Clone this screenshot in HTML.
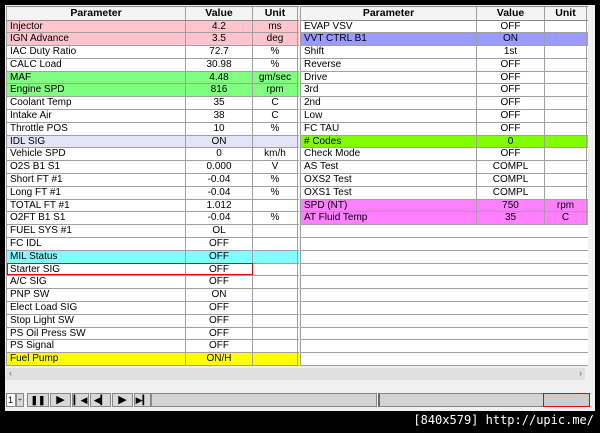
<!DOCTYPE html>
<html><head><style>
body{margin:0;width:600px;height:433px;background:#000;position:relative;overflow:hidden;font-family:"Liberation Sans",Arial,sans-serif;}
#win{position:absolute;left:5px;top:5px;width:590px;height:406px;background:#f0f0f0;}
.t{position:absolute;top:1px;font-size:10px;background:#fff;border-left:1px solid #a0a0a0;border-top:1px solid #888;}
.r{display:flex;height:12.8px;box-sizing:border-box;border-bottom:1px solid #a0a0a0;line-height:12.5px;}
.r>div{box-sizing:border-box;border-right:1px solid #a0a0a0;padding:0 3px;white-space:nowrap;overflow:hidden;}
.h{height:13.5px;background:#f4f4f4;font-weight:bold;font-size:10.5px;text-align:center;line-height:12.5px;border-bottom-color:#888}
#L .r>div:nth-child(1){width:179px}#L .r>div:nth-child(2){width:67px;text-align:center}#L .r>div:nth-child(3){width:45px;text-align:center}
#R .r>div:nth-child(1){width:176px}#R .r>div:nth-child(2){width:68px;text-align:center}#R .r>div:nth-child(3){width:42px;text-align:center}
.h>div{text-align:center!important}
.pk{background:#ffc4cc}.gr{background:#80ff80}.lv{background:#e4e4f8}
.cy{background:#80ffff}.ye{background:#ffff00}.bl{background:#9a9aff}
.lm{background:#80ff00}.mg{background:#ff80ff}
#L{left:1px;width:292px}#R{left:295px;width:287px}
#R .r>div.e{border-right-color:#fff}
#sb{position:absolute;left:1px;top:363px;width:579px;height:12px;background:#e0e0e0;font-size:9px;color:#666}
#tb{position:absolute;left:0;top:387px;width:590px;height:16px;}
.btn{position:absolute;top:1px;height:14px;background:#d8d8d8;border:1px solid #888;box-sizing:border-box;font-size:11px;line-height:13px;text-align:center}
</style></head><body>
<div id="win">
<div class="t" id="L">
<div class="r h"><div>Parameter</div><div>Value</div><div>Unit</div></div>
<div class="r pk"><div>Injector</div><div>4.2</div><div>ms</div></div>
<div class="r pk"><div>IGN Advance</div><div>3.5</div><div>deg</div></div>
<div class="r"><div>IAC Duty Ratio</div><div>72.7</div><div>%</div></div>
<div class="r"><div>CALC Load</div><div>30.98</div><div>%</div></div>
<div class="r gr"><div>MAF</div><div>4.48</div><div>gm/sec</div></div>
<div class="r gr"><div>Engine SPD</div><div>816</div><div>rpm</div></div>
<div class="r"><div>Coolant Temp</div><div>35</div><div>C</div></div>
<div class="r"><div>Intake Air</div><div>38</div><div>C</div></div>
<div class="r"><div>Throttle POS</div><div>10</div><div>%</div></div>
<div class="r lv"><div>IDL SIG</div><div>ON</div><div></div></div>
<div class="r"><div>Vehicle SPD</div><div>0</div><div>km/h</div></div>
<div class="r"><div>O2S B1 S1</div><div>0.000</div><div>V</div></div>
<div class="r"><div>Short FT #1</div><div>-0.04</div><div>%</div></div>
<div class="r"><div>Long FT #1</div><div>-0.04</div><div>%</div></div>
<div class="r"><div>TOTAL FT #1</div><div>1.012</div><div></div></div>
<div class="r"><div>O2FT B1 S1</div><div>-0.04</div><div>%</div></div>
<div class="r"><div>FUEL SYS #1</div><div>OL</div><div></div></div>
<div class="r"><div>FC IDL</div><div>OFF</div><div></div></div>
<div class="r cy"><div>MIL Status</div><div>OFF</div><div></div></div>
<div class="r" style="position:relative"><div>Starter SIG</div><div>OFF</div><div></div><span style="position:absolute;left:0;top:-1px;width:246px;height:12.8px;border:1px solid #e00;box-sizing:border-box"></span></div>
<div class="r"><div>A/C SIG</div><div>OFF</div><div></div></div>
<div class="r"><div>PNP SW</div><div>ON</div><div></div></div>
<div class="r"><div>Elect Load SIG</div><div>OFF</div><div></div></div>
<div class="r"><div>Stop Light SW</div><div>OFF</div><div></div></div>
<div class="r"><div>PS Oil Press SW</div><div>OFF</div><div></div></div>
<div class="r"><div>PS Signal</div><div>OFF</div><div></div></div>
<div class="r ye"><div>Fuel Pump</div><div>ON/H</div><div></div></div>
</div>
<div class="t" id="R">
<div class="r h"><div>Parameter</div><div>Value</div><div>Unit</div></div>
<div class="r"><div>EVAP VSV</div><div>OFF</div><div></div></div>
<div class="r bl"><div>VVT CTRL B1</div><div>ON</div><div></div></div>
<div class="r"><div>Shift</div><div>1st</div><div></div></div>
<div class="r"><div>Reverse</div><div>OFF</div><div></div></div>
<div class="r"><div>Drive</div><div>OFF</div><div></div></div>
<div class="r"><div>3rd</div><div>OFF</div><div></div></div>
<div class="r"><div>2nd</div><div>OFF</div><div></div></div>
<div class="r"><div>Low</div><div>OFF</div><div></div></div>
<div class="r"><div>FC TAU</div><div>OFF</div><div></div></div>
<div class="r lm"><div># Codes</div><div>0</div><div></div></div>
<div class="r"><div>Check Mode</div><div>OFF</div><div></div></div>
<div class="r"><div>AS Test</div><div>COMPL</div><div></div></div>
<div class="r"><div>OXS2 Test</div><div>COMPL</div><div></div></div>
<div class="r"><div>OXS1 Test</div><div>COMPL</div><div></div></div>
<div class="r mg"><div>SPD (NT)</div><div>750</div><div>rpm</div></div>
<div class="r mg"><div>AT Fluid Temp</div><div>35</div><div>C</div></div>
<div class="r"><div class="e"></div><div class="e"></div><div class="e"></div></div>
<div class="r"><div class="e"></div><div class="e"></div><div class="e"></div></div>
<div class="r"><div class="e"></div><div class="e"></div><div class="e"></div></div>
<div class="r"><div class="e"></div><div class="e"></div><div class="e"></div></div>
<div class="r"><div class="e"></div><div class="e"></div><div class="e"></div></div>
<div class="r"><div class="e"></div><div class="e"></div><div class="e"></div></div>
<div class="r"><div class="e"></div><div class="e"></div><div class="e"></div></div>
<div class="r"><div class="e"></div><div class="e"></div><div class="e"></div></div>
<div class="r"><div class="e"></div><div class="e"></div><div class="e"></div></div>
<div class="r"><div class="e"></div><div class="e"></div><div class="e"></div></div>
<div class="r"><div class="e"></div><div class="e"></div><div class="e"></div></div>
</div>
<div id="sb"><span style="position:absolute;left:3px;top:0">&lsaquo;</span><span style="position:absolute;right:3px;top:0">&rsaquo;</span></div>
<div id="tb">
<div class="btn" style="left:1px;width:10px;background:#fff;font-size:9px;text-align:left;padding-left:1px">1</div>
<div class="btn" style="left:11px;width:8px;font-size:7px">÷</div>
<div class="btn" style="left:22px;width:22px;font-weight:bold;font-size:9px">&#10074;&#10074;</div>
<div class="btn" style="left:45px;width:21px">&#9654;</div>
<div class="btn" style="left:67px;width:17px;font-size:9px">&#9614;&#9664;</div>
<div class="btn" style="left:85px;width:21px;font-size:9px">&#9664;&#9614;</div>
<div class="btn" style="left:107px;width:21px">&#9654;</div>
<div class="btn" style="left:129px;width:17px;font-size:9px">&#9654;&#9614;</div>
<div class="btn" style="left:146px;width:226px;background:#d4d4d4"></div>
<div class="btn" style="left:373px;width:212px;background:#d4d4d4;border-left:2px solid #666"></div>
<div class="btn" style="left:538px;width:47px;background:#ccc;border:1px solid #e00"></div>
</div>
</div>
<div style="position:absolute;right:6px;top:413px;color:#fff;font-family:'DejaVu Sans Mono',monospace;font-size:12px">[840x579] http://upic.me/</div>
</body></html>
